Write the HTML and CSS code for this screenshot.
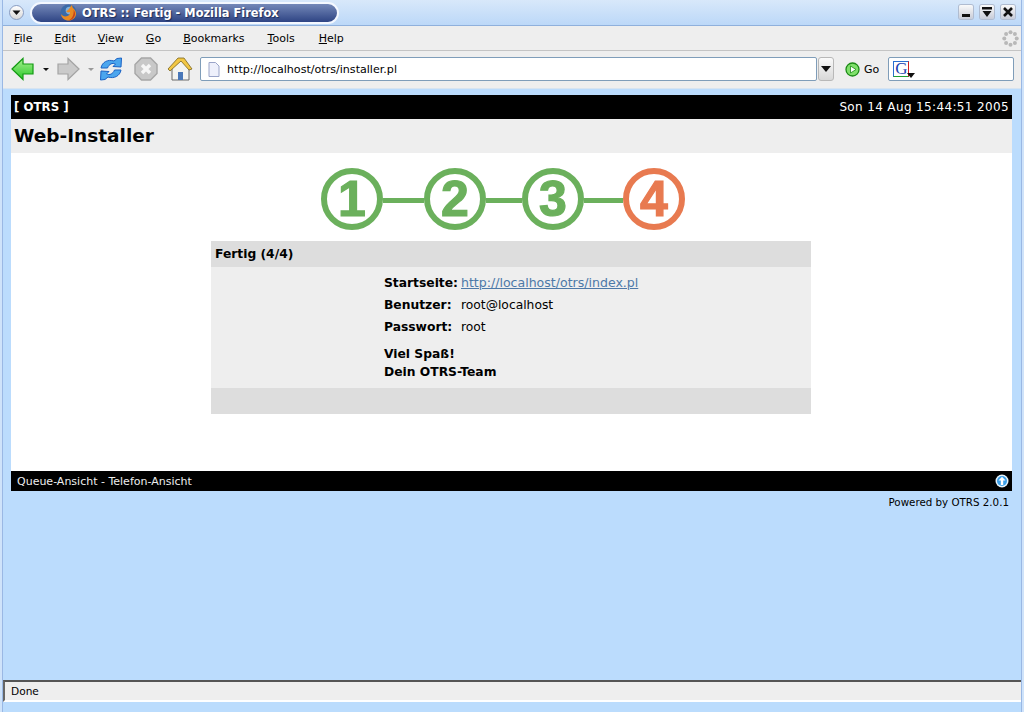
FILE: index.html
```html
<!DOCTYPE html>
<html lang="de">
<head>
    <meta charset="UTF-8">
    <title>OTRS :: Fertig - Mozilla Firefox</title>
    <link rel="stylesheet" href="styles.css">
</head>
<body>
    <div class="window">
        <!-- titlebar -->
        <div class="titlebar">
            <span class="win-menu"><svg width="13" height="13" viewBox="0 0 13 13"><path d="M2.500 4.500h8l-4 4.500z" fill="#111"/></svg></span>
            <div class="title-pill">
                <svg class="fox" width="17" height="17" viewBox="0 0 18 18">
                    <circle cx="9" cy="9" r="8.500" fill="#3a6aa8"/>
                    <circle cx="10" cy="7" r="4" fill="#7fb0dc"/>
                    <path d="M12 1c1 1 1.500 2 1.500 3 2 1.500 3.500 4 3.500 6 0 4-3.500 7.500-8 7.500-4 0-7.500-3-8-7 1.500 2 3.500 3 6 2.500 2.500-.5 4-2.500 3.500-4.500-1.500.8-3.500.5-4-1 1.500-.5 4-2.500 5.500-6.500z" fill="#ea8a22"/>
                    <path d="M14.500 6c2 3 2 6.500-.5 9-1.500 1.500-3.500 2.500-6 2.500 4-1 7-5 6.500-11.500z" fill="#c8421a"/>
                </svg>
                <span class="title-text">OTRS :: Fertig - Mozilla Firefox</span>
            </div>
            <div class="win-buttons">
                <span class="win-btn"><svg width="14" height="14" viewBox="0 0 14 14"><path d="M3 9h8v3H3z" fill="#111"/></svg></span>
                <span class="win-btn"><svg width="14" height="14" viewBox="0 0 14 14"><path d="M2 2h10v2.500H2zM2.500 6h9L7 12z" fill="#111"/></svg></span>
                <span class="win-btn"><svg width="14" height="14" viewBox="0 0 14 14"><path d="M3 3l8 8M11 3l-8 8" stroke="#111" stroke-width="2.600"/></svg></span>
            </div>
        </div>

        <div class="chrome">
            <!-- menu -->
            <div class="menubar">
                <span class="menu-item"><u>F</u>ile</span>
                <span class="menu-item"><u>E</u>dit</span>
                <span class="menu-item"><u>V</u>iew</span>
                <span class="menu-item"><u>G</u>o</span>
                <span class="menu-item"><u>B</u>ookmarks</span>
                <span class="menu-item tools"><u>T</u>ools</span>
                <span class="menu-item help"><u>H</u>elp</span>
                <svg class="throbber" width="17" height="17" viewBox="0 0 17 17" fill="#b8b8b8">
                    <circle cx="8.500" cy="2.300" r="2"/><circle cx="12.900" cy="4.100" r="2"/><circle cx="14.700" cy="8.500" r="2"/><circle cx="12.900" cy="12.900" r="2"/>
                    <circle cx="8.500" cy="14.700" r="2"/><circle cx="4.100" cy="12.900" r="2"/><circle cx="2.300" cy="8.500" r="2"/><circle cx="4.100" cy="4.100" r="2"/>
                </svg>
            </div>

            <!-- toolbar -->
            <div class="toolbar">
                <svg class="tool back" width="24" height="24" viewBox="0 0 24 24">
                    <defs><linearGradient id="greenFill" x1="0" y1="0" x2="0" y2="1"><stop offset="0" stop-color="#a8f090"/><stop offset="1" stop-color="#28c828"/></linearGradient></defs>
                    <path d="M1 12L12 1.500V7h10v10H12v5.500z" fill="url(#greenFill)" stroke="#139a13" stroke-width="1.200"/>
                </svg>
                <span class="drop"></span>
                <svg class="tool forward" width="24" height="24" viewBox="0 0 24 24"><path d="M23 12L12 1.500V7H2v10h10v5.500z" fill="#cacaca" stroke="#a4a4a4" stroke-width="1.200"/></svg>
                <span class="drop off"></span>
                <svg class="tool reload" width="24" height="24" viewBox="0 0 24 24">
                    <path d="M2 11C3 5 9 2 15 4l3-2.500 4.500-.5-.5 9-8-.5 2.500-2.500c-3-1.500-6.500 0-8 4z" fill="#4ba6ee" stroke="#1b62c4" stroke-width="1"/>
                    <path d="M22 13c-1 6-7 9-13 7l-3 2.500-4.500.5.500-9 8 .5-2.500 2.500c3 1.500 6.500 0 8-4z" fill="#4ba6ee" stroke="#1b62c4" stroke-width="1"/>
                </svg>
                <svg class="tool stop" width="24" height="24" viewBox="0 0 24 24">
                    <path d="M7.500 1h9L23 7.500v9L16.500 23h-9L1 16.500v-9z" fill="#c8c8c8" stroke="#a6a6a6" stroke-width="1.400"/>
                    <path d="M8 8l8 8M16 8l-8 8" stroke="#f6f6f6" stroke-width="3.400"/>
                </svg>
                <svg class="tool home" width="26" height="26" viewBox="0 0 26 26">
                    <path d="M5 12v12h17V12l-8-8z" fill="#f4f4f0" stroke="#6a6a6a"/>
                    <path d="M1 13L11 2h6l8 11-3 1-8-9-11 10z" fill="#f2c744" stroke="#7a6420" stroke-width=".8"/>
                    <path d="M11 16h5v8h-5z" fill="#4a78b8"/>
                </svg>
                <div class="urlbar">
                    <svg width="12" height="15" viewBox="0 0 12 15"><path d="M1 .5h6.500L11 4v10.500H1z" fill="#eef0fb" stroke="#9aa4c8"/></svg>
                    <span class="url-text">http://localhost/otrs/installer.pl</span>
                </div>
                <span class="url-drop"><svg width="10" height="6" viewBox="0 0 10 6"><path d="M0 0h10L5 6z" fill="#111"/></svg></span>
                <svg class="go-icon" width="15" height="15" viewBox="0 0 15 15"><circle cx="7.500" cy="7.500" r="6.500" fill="#7fe06a" stroke="#1c8a16" stroke-width="1.300"/><path d="M5.500 4v7l5.500-3.500z" fill="#fff" stroke="#1c8a16" stroke-width=".8"/></svg>
                <span class="go-text">Go</span>
                <div class="searchbar">
                    <span class="g-box">G</span>
                    <svg class="g-arrow" width="8" height="5" viewBox="0 0 8 5"><path d="M0 0h8L4 5z" fill="#111"/></svg>
                </div>
            </div>
        </div>

        <!-- page content -->
        <div class="viewport">
            <div class="top-bar">
                <b class="brand">[ OTRS ]</b>
                <span>Son 14 Aug 15:44:51 2005</span>
            </div>
            <div class="app-title">Web-Installer</div>
            <div class="content">
                <div class="steps">
                    <span class="step">1</span><span class="line line-a"></span>
                    <span class="step">2</span><span class="line line-b"></span>
                    <span class="step">3</span><span class="line line-c"></span>
                    <span class="step current">4</span>
                </div>
                <div class="panel">
                    <div class="panel-head">Fertig (4/4)</div>
                    <div class="panel-body">
                        <div class="info-row"><b class="key">Startseite:</b> <a href="#">http://localhost/otrs/index.pl</a></div>
                        <div class="info-row"><b class="key">Benutzer:</b> <span>root@localhost</span></div>
                        <div class="info-row"><b class="key">Passwort:</b> <span>root</span></div>
                        <p class="bye"><b>Viel Spaß!<br>Dein OTRS-Team</b></p>
                    </div>
                    <div class="panel-foot"></div>
                </div>
            </div>
            <div class="bottom-bar">
                <span>Queue-Ansicht - Telefon-Ansicht</span>
                <svg width="14" height="14" viewBox="0 0 14 14"><circle cx="7" cy="7" r="6.500" fill="#e8f4fc"/><circle cx="7" cy="7" r="5" fill="#3c9fe8"/><path d="M7 2.800L10.500 6.500H8.200V11H5.800V6.500H3.500z" fill="#fff"/></svg>
            </div>
            <div class="powered">Powered by OTRS 2.0.1</div>
        </div>

        <div class="statusbar"><div class="status-inner">Done</div></div>
    </div>
</body>
</html>
```
FILE: styles.css
```css
html, body {
    margin: 0;
    padding: 0;
    height: 100%;
    overflow: hidden;
}

body {
    font-family: "DejaVu Sans", sans-serif;
    font-size: 11px;
    color: #000;
    box-sizing: border-box;
    border-left: 2px solid #cfe3fa;
    border-right: 2px solid #cfe3fa;
}

.window {
    height: 712px;
    display: flex;
    flex-direction: column;
    background-color: #bbdcfd;
    border-left: 1px solid #9ab8e4;
    border-right: 1px solid #9ab8e4;
    box-sizing: border-box;
}

/* titlebar */
.titlebar {
    height: 26px;
    flex: none;
    display: flex;
    align-items: center;
    padding: 0 6px 1px 6px;
    box-sizing: border-box;
    background: linear-gradient(#d8e8fa, #bcd8f8);
    border-bottom: 1px solid #8fb0dc;
}

.win-menu {
    width: 13px;
    height: 13px;
    border-radius: 50%;
    background: linear-gradient(#ffffff, #d8d8d8);
    border: 1px solid #8a9cc0;
    margin-right: 6px;
}

.title-pill {
    width: 309px;
    height: 22px;
    margin-top: 2px;
    display: flex;
    align-items: center;
    box-sizing: border-box;
    border: 2px solid #f4f8ff;
    border-radius: 11px;
    background: linear-gradient(#7488b8, #2e4484);
    position: relative;
}

.fox {
    position: absolute;
    left: 28px;
    top: 0;
}

.title-text {
    margin-left: 50px;
    color: #fff;
    font-size: 11.400px;
    font-weight: bold;
    white-space: nowrap;
    text-shadow: 1px 1px 1px #1c2c58;
}

.win-buttons {
    margin-left: auto;
    display: flex;
    gap: 7px;
}

.win-btn {
    width: 14px;
    height: 14px;
    display: block;
    background: linear-gradient(#fafafa, #c8ccd8);
    border-radius: 2px;
    box-shadow: 0 0 0 1px #b0bcd0;
}

/* menu + toolbar */
.chrome {
    flex: none;
    background-color: #eeeeee;
}

.menubar {
    height: 25px;
    display: flex;
    align-items: center;
    padding-left: 11px;
    gap: 22px;
    box-sizing: border-box;
    border-bottom: 1px solid #c4c4c4;
    position: relative;
}

.tools {
    margin-left: 1px;
}

.help {
    margin-left: 2px;
}

.throbber {
    position: absolute;
    right: 2px;
    top: 4px;
}

.toolbar {
    height: 37px;
    display: flex;
    align-items: center;
    padding: 0 0 1px 8px;
    box-sizing: border-box;
}

.tool {
    flex: none;
}

.drop {
    width: 0;
    height: 0;
    border-left: 3px solid transparent;
    border-right: 3px solid transparent;
    border-top: 3px solid #111;
    margin: 0 7px 0 8px;
}

.drop.off {
    border-top-color: #999;
}

.reload {
    margin-left: -2px;
}

.stop {
    margin-left: 11px;
}

.home {
    margin-left: 9px;
}

.urlbar {
    width: 617px;
    height: 24px;
    margin-left: 7px;
    display: flex;
    align-items: center;
    gap: 7px;
    padding-left: 7px;
    box-sizing: border-box;
    background-color: #fff;
    border: 1px solid #7f9db9;
    border-radius: 2px;
}

.url-text {
    font-size: 11.100px;
}

.url-drop {
    width: 16px;
    height: 24px;
    margin-left: 1px;
    display: flex;
    align-items: center;
    justify-content: center;
    background: linear-gradient(#fafafa, #d8d8d8);
    border: 1px solid #b8b8b8;
    border-radius: 3px;
    box-sizing: border-box;
}

.go-icon {
    margin-left: 11px;
}

.go-text {
    margin-left: 4px;
}

.searchbar {
    width: 126px;
    height: 24px;
    margin-left: 9px;
    padding: 3px 0 0 4px;
    display: flex;
    box-sizing: border-box;
    background-color: #fff;
    border: 1px solid #7f9db9;
    border-radius: 2px;
    position: relative;
}

.g-box {
    width: 16px;
    height: 16px;
    display: block;
    font-family: "Liberation Serif", serif;
    font-size: 17px;
    line-height: 14px;
    text-align: center;
    color: #1d3fb0;
    border-left: 1px solid #2a6fd0;
    border-top: 1px solid #2a6fd0;
    border-right: 1px solid #d02020;
    border-bottom: 1px solid #20a030;
    box-sizing: border-box;
}

.g-arrow {
    position: absolute;
    left: 18px;
    top: 15px;
}

/* page */
.viewport {
    flex: 1;
    border-top: 1px solid #d8e4f0;
    padding: 6px 9px 0 8px;
    min-height: 0;
}

.top-bar {
    height: 24px;
    display: flex;
    align-items: center;
    justify-content: space-between;
    padding: 0 3px;
    background-color: #000;
    color: #fff;
    font-size: 12px;
    letter-spacing: .36px;
}

.brand {
    letter-spacing: 0;
    font-size: 11.800px;
}

.app-title {
    height: 34px;
    line-height: 34px;
    padding-left: 3px;
    background-color: #eeeeee;
    font-size: 18.500px;
    font-weight: bold;
}

.content {
    height: 318px;
    padding-top: 15px;
    box-sizing: border-box;
    background-color: #fff;
}

.steps {
    display: flex;
    align-items: center;
    justify-content: center;
    height: 62px;
    padding-right: 17px;
}

.step {
    width: 62px;
    height: 62px;
    flex: none;
    box-sizing: border-box;
    border: 6px solid #6bb05c;
    border-radius: 50%;
    color: #6bb05c;
    font-family: "Liberation Sans", sans-serif;
    font-size: 50px;
    font-weight: bold;
    line-height: 50px;
    text-align: center;
    -webkit-text-stroke: 1.200px currentColor;
}

.step.current {
    color: #e87a50;
    border-color: #e87a50;
}

.line {
    height: 5px;
    margin-top: 3px;
    background-color: #6bb05c;
    flex: none;
}

.line-a {
    width: 41px;
}

.line-b {
    width: 36px;
}

.line-c {
    width: 39px;
}

.panel {
    width: 600px;
    margin: 11px 0 0 200px;
    font-size: 12.300px;
}

.panel-head {
    height: 26px;
    line-height: 26px;
    padding-left: 4px;
    background-color: #dddddd;
    font-weight: bold;
}

.panel-body {
    height: 121px;
    padding: 5px 0 0 173px;
    box-sizing: border-box;
    background-color: #eeeeee;
}

.info-row {
    height: 22px;
    line-height: 22px;
    display: flex;
}

.key {
    width: 77px;
    flex: none;
}

.info-row a {
    color: #4d79a8;
    font-size: 12.550px;
}

.bye {
    margin: 7px 0 0;
    line-height: 18px;
}

.panel-foot {
    height: 26px;
    background-color: #dddddd;
}

.bottom-bar {
    height: 20px;
    display: flex;
    align-items: center;
    justify-content: space-between;
    padding: 0 3px 0 6px;
    background-color: #000;
    color: #eee;
}

.powered {
    height: 20px;
    line-height: 22px;
    padding-right: 3px;
    text-align: right;
    font-size: 10.300px;
}

/* status */
.statusbar {
    height: 32px;
    flex: none;
    padding: 0 0 10px 0;
    box-sizing: border-box;
    background-color: #bbdcfd;
}

.status-inner {
    height: 22px;
    line-height: 19px;
    padding-left: 6px;
    box-sizing: border-box;
    background-color: #eeeeee;
    border-top: 2px solid #555;
    border-left: 2px solid #666;
    border-bottom: 2px solid #fff;
    font-size: 10.600px;
}
```
